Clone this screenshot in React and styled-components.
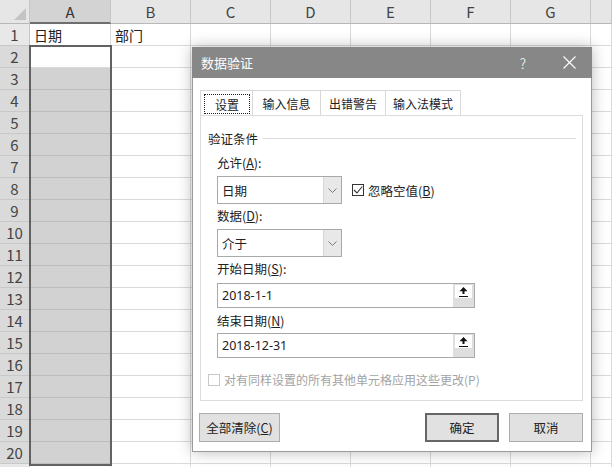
import React from 'react';
import styled, { createGlobalStyle } from 'styled-components';

const GlobalStyle = createGlobalStyle`
  html, body {
    margin: 0;
    padding: 0;
    background: #fff;
    overflow: hidden;
  }
  body {
    font-family: "Noto Sans CJK SC", "Noto Sans", sans-serif;
    color: #222;
  }
`;

const Page = styled.div`
  position: relative;
  width: 612px;
  height: 467px;
  overflow: hidden;
`;

const Sheet = styled.div`
  display: grid;
  grid-template-columns: 30px 81px repeat(6, 80px) 1fr;
  grid-template-rows: 24px;
  grid-auto-rows: 22px;
`;

const Corner = styled.div`
  position: relative;
  background: #e6e6e6;
  border-right: 1px solid #c6c6c6;
  border-bottom: 1px solid #b8b8b8;
  box-sizing: border-box;
  &::after {
    content: "";
    position: absolute;
    right: 3px;
    bottom: 3px;
    border-left: 12px solid transparent;
    border-bottom: 12px solid #c4c4c4;
  }
`;

const ColHead = styled.div`
  display: flex;
  align-items: center;
  justify-content: center;
  box-sizing: border-box;
  font-size: 15px;
  color: ${p => (p.$active ? '#333' : '#444')};
  background: ${p => (p.$active ? '#d3d3d3' : '#e6e6e6')};
  border-right: 1px solid #c6c6c6;
  border-bottom: ${p => (p.$active ? '2px solid #6e6e6e' : '1px solid #b8b8b8')};
`;

const RowHead = styled.div`
  display: flex;
  align-items: center;
  justify-content: center;
  box-sizing: border-box;
  font-size: 15px;
  color: #444;
  background: ${p => (p.$active ? '#dadada' : '#e8e8e8')};
  border-right: 1px solid #c6c6c6;
  border-bottom: 1px solid #c8c8c8;
`;

const Cell = styled.div`
  display: flex;
  align-items: center;
  padding-left: 4px;
  box-sizing: border-box;
  font-size: 14px;
  color: #222;
  background: ${p => (p.$sel ? '#d2d2d2' : '#fff')};
  border-right: 1px solid ${p => (p.$sel ? '#c0c0c0' : '#dadada')};
  border-bottom: 1px solid ${p => (p.$sel ? '#bcbcbc' : '#dadada')};
`;

const Selection = styled.div`
  position: absolute;
  left: 29px;
  top: 45px;
  width: 83px;
  height: 421px;
  box-sizing: border-box;
  border: 2px solid #626262;
  pointer-events: none;
`;

/* dialog */

const Dialog = styled.div`
  position: absolute;
  left: 192px;
  top: 47px;
  width: 400px;
  height: 405px;
  box-sizing: border-box;
  background: #fff;
  border: 1px solid #9a9a9a;
  box-shadow: 0 0 14px rgba(0, 0, 0, 0.28);
  display: flex;
  flex-direction: column;
  font-size: 12px;
`;

const TitleBar = styled.div`
  height: 31px;
  flex-shrink: 0;
  display: flex;
  align-items: center;
  background: #878787;
  color: #fff;
  padding-left: 9px;
  margin: -1px -1px 0 -1px;
`;

const Title = styled.span`
  flex: 1;
  font-size: 13px;
`;

const TitleButton = styled.div`
  width: 46px;
  height: 31px;
  display: flex;
  align-items: center;
  justify-content: center;
  font-size: 14px;
  font-weight: 300;
  color: #fff;
`;

const Body = styled.div`
  flex: 1;
  display: flex;
  flex-direction: column;
  padding: 12px 8px 9px 7px;
`;

const Tabs = styled.div`
  display: flex;
  height: 25px;
`;

const Tab = styled.div`
  width: ${p => p.$w}px;
  box-sizing: border-box;
  display: flex;
  align-items: stretch;
  padding: ${p => (p.$active ? '3px 2px 1px 3px' : '0')};
  border: 1px solid #d9d9d9;
  border-bottom: none;
  border-left: ${p => (p.$first ? '1px solid #d9d9d9' : 'none')};
  background: #fff;
  color: #222;
`;

const TabLabel = styled.span`
  flex: 1;
  display: flex;
  align-items: center;
  justify-content: center;
  border: ${p => (p.$focus ? '1px dotted #222' : 'none')};
`;

const Panel = styled.div`
  flex: 1;
  border: 1px solid #dcdcdc;
  padding: 0 6px 0 7px;
  display: flex;
  flex-direction: column;
`;

const GroupTitle = styled.div`
  margin-top: 13px;
  height: 18px;
  display: flex;
  align-items: center;
  font-size: 12.5px;
  &::after {
    content: "";
    flex: 1;
    height: 1px;
    background: #dcdcdc;
    margin-left: 5px;
  }
`;

const Fields = styled.div`
  margin-left: 9px;
  display: flex;
  flex-direction: column;
`;

const Label = styled.div`
  margin-top: ${p => p.$mt}px;
  height: 18px;
  line-height: 18px;
  font-size: 12.5px;
`;

const Row = styled.div`
  margin-top: ${p => p.$mt}px;
  display: flex;
  align-items: center;
`;

const Select = styled.div`
  width: 125px;
  height: 28px;
  box-sizing: border-box;
  border: 1px solid #a9a9a9;
  display: flex;
  background: #fff;
`;

const SelectText = styled.span`
  flex: 1;
  display: flex;
  align-items: center;
  padding-left: 4px;
  font-size: 12.5px;
`;

const SelectArrow = styled.span`
  width: 17px;
  display: flex;
  align-items: center;
  justify-content: center;
  background: #e8e8e8;
  border-left: 1px solid #d6d6d6;
`;

const Check = styled.span`
  width: 12px;
  height: 12px;
  box-sizing: border-box;
  border: 1px solid ${p => (p.$disabled ? '#c8c8c8' : '#333')};
  background: #fff;
  display: flex;
  align-items: center;
  justify-content: center;
`;

const CheckText = styled.span`
  margin-left: 4px;
  font-size: ${p => (p.$disabled ? 12 : 12.5)}px;
  color: ${p => (p.$disabled ? '#a3a3a3' : '#222')};
`;

const CheckLine = styled.label`
  display: flex;
  align-items: center;
  margin-left: ${p => p.$ml || 0}px;
  margin-top: ${p => p.$mt || 0}px;
`;

const Input = styled.div`
  margin-top: ${p => p.$mt}px;
  width: 258px;
  height: 25px;
  box-sizing: border-box;
  border: 1px solid #a9a9a9;
  display: flex;
`;

const InputText = styled.span`
  flex: 1;
  display: flex;
  align-items: center;
  padding-left: 4px;
  font-size: 12.5px;
  font-family: "Noto Sans", "Noto Sans CJK SC", sans-serif;
`;

const RefButton = styled.span`
  width: 21px;
  background: #dedede;
  padding: 1px 2px 0 2px;
  box-sizing: border-box;
  display: flex;
  align-items: flex-start;
  justify-content: center;
`;

const RefFace = styled.span`
  width: 17px;
  height: 13px;
  background: #fff;
  display: flex;
`;

const Buttons = styled.div`
  margin-top: 12px;
  display: flex;
  gap: 10px;
  margin-left: -1px;
`;

const Button = styled.div`
  width: ${p => p.$w}px;
  height: 29px;
  box-sizing: border-box;
  display: flex;
  align-items: center;
  justify-content: center;
  background: #e1e1e1;
  border: ${p => (p.$default ? '2px solid #666' : '1px solid #adadad')};
  font-size: 12.5px;
  color: #222;
  margin-left: ${p => (p.$push ? 'auto' : '0')};
`;

const Chevron = () => (
  <svg width="9" height="5" viewBox="0 0 9 5">
    <path d="M0.5 0.5 L4.5 4.5 L8.5 0.5" fill="none" stroke="#7a7a7a" strokeWidth="1" />
  </svg>
);

const Tick = () => (
  <svg width="10" height="10" viewBox="0 0 10 10">
    <path d="M1 5 L4 8 L9.2 1.5" fill="none" stroke="#333" strokeWidth="1.1" />
  </svg>
);

const RefIcon = () => (
  <svg width="17" height="13" viewBox="0 0 17 13">
    <path d="M8.5 2 L4.5 6.2 L7.5 6.2 L7.5 9 L9.5 9 L9.5 6.2 L12.5 6.2 Z" fill="#111" />
    <rect x="4" y="11" width="9" height="1" fill="#111" />
  </svg>
);

const CloseIcon = () => (
  <svg width="13" height="13" viewBox="0 0 13 13">
    <path d="M0.5 0.5 L12.5 12.5 M12.5 0.5 L0.5 12.5" stroke="#fff" strokeWidth="1.1" />
  </svg>
);

const cols = ['A', 'B', 'C', 'D', 'E', 'F', 'G', ''];
const rowData = { 1: ['日期', '部门'] };

const tabs = [
  { label: '设置', w: 53, active: true },
  { label: '输入信息', w: 68 },
  { label: '出错警告', w: 65 },
  { label: '输入法模式', w: 75 },
];

export default function App() {
  const rows = Array.from({ length: 21 }, (_, i) => i + 1);
  return (
    <Page>
      <GlobalStyle />
      <Sheet>
        <Corner />
        {cols.map((c, i) => (
          <ColHead key={'h' + i} $active={c === 'A'}>{c}</ColHead>
        ))}
        {rows.map(r => (
          <React.Fragment key={r}>
            {/* row 21 is only a sliver at the bottom edge, its number is off-screen */}
            <RowHead $active={r >= 2 && r <= 20}>{r <= 20 ? r : ''}</RowHead>
            {cols.map((c, i) => (
              <Cell key={c + i} $sel={c === 'A' && r >= 3 && r <= 20}>
                {(rowData[r] && rowData[r][i]) || ''}
              </Cell>
            ))}
          </React.Fragment>
        ))}
      </Sheet>
      <Selection />

      <Dialog>
        <TitleBar>
          <Title>数据验证</Title>
          <TitleButton>?</TitleButton>
          <TitleButton><CloseIcon /></TitleButton>
        </TitleBar>
        <Body>
          <Tabs>
            {tabs.map((t, i) => (
              <Tab key={t.label} $w={t.w} $active={t.active} $first={i === 0}>
                <TabLabel $focus={t.active}>{t.label}</TabLabel>
              </Tab>
            ))}
          </Tabs>
          <Panel>
            <GroupTitle>验证条件</GroupTitle>
            <Fields>
              <Label $mt={7}>允许(<u>A</u>):</Label>
              <Row $mt={4}>
                <Select>
                  <SelectText>日期</SelectText>
                  <SelectArrow><Chevron /></SelectArrow>
                </Select>
                <CheckLine $ml={10}>
                  <Check><Tick /></Check>
                  <CheckText>忽略空值(<u>B</u>)</CheckText>
                </CheckLine>
              </Row>
              <Label $mt={3}>数据(<u>D</u>):</Label>
              <Row $mt={4}>
                <Select>
                  <SelectText>介于</SelectText>
                  <SelectArrow><Chevron /></SelectArrow>
                </Select>
              </Row>
              <Label $mt={3}>开始日期(<u>S</u>):</Label>
              <Input $mt={5}>
                <InputText>2018-1-1</InputText>
                <RefButton><RefFace><RefIcon /></RefFace></RefButton>
              </Input>
              <Label $mt={4}>结束日期(<u>N</u>)</Label>
              <Input $mt={3}>
                <InputText>2018-12-31</InputText>
                <RefButton><RefFace><RefIcon /></RefFace></RefButton>
              </Input>
            </Fields>
            <CheckLine $mt={13}>
              <Check $disabled />
              <CheckText $disabled>对有同样设置的所有其他单元格应用这些更改(P)</CheckText>
            </CheckLine>
          </Panel>
          <Buttons>
            <Button $w={81}>全部清除(<u>C</u>)</Button>
            <Button $w={74} $default $push>确定</Button>
            <Button $w={74}>取消</Button>
          </Buttons>
        </Body>
      </Dialog>
    </Page>
  );
}
